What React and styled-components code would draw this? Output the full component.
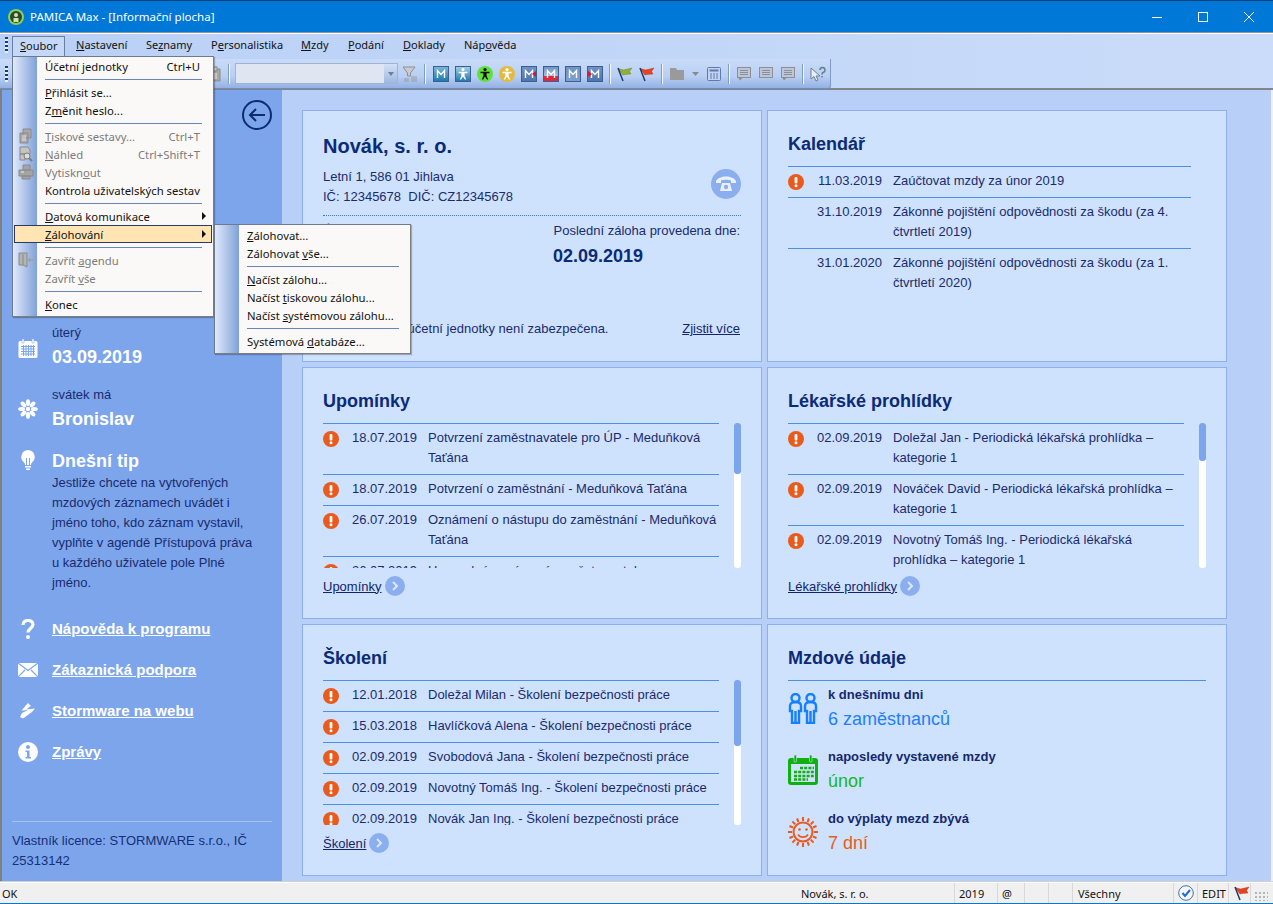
import React from 'react';
import styled, { createGlobalStyle } from 'styled-components';

const GlobalStyle = createGlobalStyle`
  html, body { margin: 0; padding: 0; height: 100%; overflow: hidden; }
  body { font-family: "Liberation Sans", Arial, sans-serif; font-size: 13px; color: #1a2b6d; }
  * { box-sizing: border-box; }
`;

const uiFont = '"Noto Sans", "Liberation Sans", sans-serif';

const Window = styled.div`
  position: relative;
  width: 1273px;
  height: 904px;
  display: flex;
  flex-direction: column;
  background: #f0f0f0;
  overflow: hidden;
`;

const TitleBar = styled.div`
  height: 33px;
  flex: none;
  background: #0078d7;
  border-top: 1px solid #0a3f78;
  border-bottom: 1px solid #8f9499;
  display: flex;
  align-items: center;
  padding: 0 1px 0 8px;
  color: white;
  font: 11.5px ${uiFont};
`;

const TitleText = styled.span`
  margin-left: 6px;
  flex: 1;
`;

const WinControl = styled.div`
  width: 46px;
  height: 31px;
  display: flex;
  align-items: center;
  justify-content: center;
`;

const Bars = styled.div`
  flex: none;
  height: 57px;
  border-top: 1px solid white;
  border-bottom: 2px solid #83858a;
  background: linear-gradient(90deg, #b9d0f6 0%, #cadcf9 100%);
`;

const MenuBar = styled.div`
  height: 25px;
  display: flex;
  align-items: flex-start;
  padding: 2px 0 0 5px;
  font: 11px ${uiFont};
  color: #111;
  u { text-underline-offset: 1px; }
`;

const Grip = styled.div`
  width: 3px;
  height: 16px;
  margin: 1px 4px 0 0;
  flex: none;
  background: repeating-linear-gradient(180deg, #1d3a72 0 2px, #e8eefb 2px 4px);
`;

const MenuHead = styled.div`
  width: ${p => p.$w}px;
  height: 20px;
  padding: 0 0 3px 8px;
  display: flex;
  align-items: center;
  flex: none;
  ${p => p.$open && `
    background: #c6d8f7;
    border: 1px solid #6b7f9e;
    border-bottom: none;
    padding-left: 7px;
  `}
`;

const ToolBar = styled.div`
  width: 831px;
  height: 30px;
  display: flex;
  align-items: center;
  padding-left: 5px;
  background: linear-gradient(180deg, #c9dbf8 0%, #b9cff3 60%, #92b1e4 100%);
  border-right: 1px solid #7f9ac8;
  border-bottom: 1px solid #6f8cbf;
  border-radius: 0 0 3px 0;
  ${Grip} { margin-top: 0; }
`;

const ToolSpacer = styled.div`
  flex: none;
  width: ${p => p.$w}px;
`;

const ToolBtn = styled.div`
  flex: none;
  width: ${p => p.$w || 22}px;
  height: 22px;
  display: flex;
  align-items: center;
  justify-content: center;
`;

const ToolSep = styled.div`
  flex: none;
  width: 2px;
  height: 20px;
  margin: 0 3px;
  background: linear-gradient(90deg, #7f9cc9 50%, #f4f8ff 50%);
`;

const Combo = styled.div`
  flex: none;
  width: 163px;
  height: 21px;
  margin-left: 2px;
  margin-right: 1px;
  background: #dfe6f1;
  border: 1px solid #9fb3d2;
  display: flex;
  justify-content: flex-end;
`;

const ComboArrow = styled.div`
  width: 13px;
  background: linear-gradient(180deg, #d4e1f6, #9db8e2);
  display: flex;
  align-items: center;
  justify-content: center;
  &::after {
    content: '';
    border: 3px solid transparent;
    border-top: 4px solid #6c7f9c;
    border-bottom: none;
  }
`;

const Work = styled.div`
  flex: 1;
  min-height: 0;
  display: flex;
  border-left: 2px solid #7f7f7f;
  border-right: 2px solid #f0f0f0;
`;

const Sidebar = styled.aside`
  width: 280px;
  flex: none;
  background: #7ca5ec;
  padding: 10px 28px 0 16px;
  display: flex;
  flex-direction: column;
`;

const BackButton = styled.div`
  align-self: flex-end;
  margin-right: -18px;
  height: 30px;
  margin-bottom: 193px;
`;

const SideRow = styled.div`
  display: flex;
  gap: 14px;
  align-items: ${p => p.$top ? 'flex-start' : 'center'};
  margin-top: ${p => p.$gap || 0}px;
`;

const SideIcon = styled.div`
  width: 20px;
  height: 20px;
  flex: none;
  display: flex;
  align-items: center;
  justify-content: center;
  margin-top: ${p => p.$shift || 0}px;
`;

const SmallLabel = styled.div`
  line-height: 20px;
`;

const BigValue = styled.div`
  font-size: 18px;
  font-weight: bold;
  color: white;
  line-height: 28px;
`;

const TipHead = styled(BigValue)`
  margin-bottom: -2px;
`;

const TipText = styled.div`
  line-height: 20px;
`;

const SideLink = styled.a`
  font-size: 15px;
  font-weight: bold;
  color: white;
  text-decoration: underline;
  line-height: 20px;
`;

const SideLinks = styled.div`
  display: flex;
  flex-direction: column;
  gap: 21px;
  margin-top: 26px;
`;

const License = styled.div`
  margin: auto -18px 0 -6px;
  padding: 9px 0 11px;
  border-top: 1px solid #a6c3f4;
  line-height: 20px;
  color: #153077;
`;

const Main = styled.main`
  flex: 1;
  min-width: 0;
  background: #b8cff8;
  padding: 20px 0 0 20px;
`;

const Cards = styled.div`
  display: grid;
  grid-template-columns: 460px 460px;
  grid-template-rows: 252px 252px 252px;
  gap: 5px;
`;

const Card = styled.section`
  background: #cfe2fd;
  border: 1px solid #8cafef;
  padding: 0 20px;
  display: flex;
  flex-direction: column;
  min-height: 0;
`;

const CardTitle = styled.h2`
  margin: 0;
  height: 55px;
  padding-top: 21px;
  font-size: 18px;
  line-height: 24px;
  font-weight: bold;
  color: #0b2a78;
`;

const CompanyName = styled(CardTitle)`
  font-size: 20px;
  height: auto;
  padding-top: 23px;
`;

const CompanyTop = styled.div`
  display: flex;
  justify-content: space-between;
  align-items: flex-end;
  margin-top: 9px;
  padding-bottom: 8px;
  border-bottom: 1px dotted #4a76c0;
  line-height: 20px;
`;

const PhoneBadge = styled.div`
  width: 30px;
  height: 30px;
  border-radius: 50%;
  background: #8aaeee;
  display: flex;
  align-items: center;
  justify-content: center;
  margin-bottom: 8px;
`;

const BackupRow = styled.div`
  display: flex;
  justify-content: space-between;
  margin-top: 5px;
  padding-right: 1px;
  line-height: 20px;
`;

const BackupRight = styled.div`
  width: 187px;
  text-align: right;
  white-space: nowrap;
  flex: none;
`;

const BackupDate = styled.div`
  font-size: 18px;
  font-weight: bold;
  color: #0b2a78;
  text-align: left;
  line-height: 30px;
`;

const CompanyBottom = styled.div`
  display: flex;
  justify-content: space-between;
  margin-top: auto;
  margin-bottom: 22px;
  padding-right: 1px;
  line-height: 20px;
`;

const TextLink = styled.a`
  color: #12256a;
  text-decoration: underline;
`;

const ListArea = styled.div`
  display: flex;
  gap: 15px;
  height: ${p => p.$h}px;
  flex: none;
`;

const List = styled.div`
  flex: 1;
  min-width: 0;
  overflow: hidden;
  ${p => p.$inset && `margin-right: ${p.$inset}px;`}
`;

const Row = styled.div`
  display: flex;
  border-top: 1px solid #4f8fe2;
  padding: 4px 0 6px;
  line-height: 20px;
`;

const RowIcon = styled.div`
  width: 16px;
  height: 16px;
  flex: none;
  margin-top: 3px;
`;

const RowDate = styled.div`
  width: 78px;
  flex: none;
  text-align: right;
`;

const RowText = styled.div`
  margin-left: 11px;
  flex: 1;
`;

const Track = styled.div`
  width: 7px;
  flex: none;
  background: white;
  border-radius: 3px;
`;

const Thumb = styled.div`
  height: ${p => p.$h}px;
  background: #7ca5ec;
  border-radius: 3px;
`;

const MoreLink = styled.div`
  display: flex;
  align-items: center;
  gap: 3px;
  margin-top: 8px;
`;

const MoreArrow = styled.div`
  width: 20px;
  height: 20px;
  border-radius: 50%;
  background: #8aaeee;
  display: flex;
  align-items: center;
  justify-content: center;
`;

const WageItems = styled.div`
  border-top: 1px solid #4f8fe2;
  padding-top: 4px;
  display: flex;
  flex-direction: column;
`;

const WageItem = styled.div`
  display: flex;
  gap: 10px;
  height: 62px;
`;

const WageIcon = styled.div`
  width: 30px;
  height: 46px;
  flex: none;
  display: flex;
  align-items: center;
`;

const WageLabel = styled.div`
  font-weight: bold;
  line-height: 20px;
  color: #14286e;
`;

const WageValue = styled.div`
  font-size: 18px;
  line-height: 28px;
  color: ${p => p.$color};
`;

const StatusBar = styled.footer`
  flex: none;
  height: 22px;
  border-top: 1px solid #fff;
  border-bottom: 1px solid #0078d7;
  box-shadow: 0 -1px 0 #d0d0d0;
  display: flex;
  align-items: center;
  font: 11px ${uiFont};
  color: #111;
`;

const StatusCell = styled.div`
  flex: ${p => p.$grow ? 1 : 'none'};
  width: ${p => p.$w ? p.$w + 'px' : 'auto'};
  height: 100%;
  padding-left: ${p => p.$pad ?? 4}px;
  display: flex;
  align-items: center;
  ${p => !p.$noline && 'border-right: 1px solid #d8d8d8;'}
`;

const StatusMessage = styled.span`
  flex: 1;
`;

const StatusCompany = styled.span`
  width: 153px;
`;

const ResizeGrip = styled.div`
  width: 14px;
  height: 10px;
  margin: 6px 0 0 3px;
  background: radial-gradient(circle, #b5b5b5 1px, transparent 1.2px) 0 0 / 4px 4px;
`;

const Popup = styled.div`
  position: absolute;
  left: ${p => p.$x}px;
  top: ${p => p.$y}px;
  width: ${p => p.$w}px;
  height: ${p => p.$h}px;
  background: #fbf9f7;
  border: 1px solid #6d7a8c;
  border-right-color: #7d7d7d;
  border-bottom-color: #7d7d7d;
  padding: ${p => p.$pt}px 1px 0 25px;
  box-shadow: 1px 1px 1px rgba(0, 0, 0, 0.25);
  font: 11.3px ${uiFont};
  color: #111;
  z-index: ${p => p.$z || 5};
  u { text-underline-offset: 1px; }
  &::before {
    content: '';
    position: absolute;
    left: 0;
    top: 0;
    bottom: 0;
    width: 24px;
    background: linear-gradient(90deg, #e0e9fb 0%, #7fa1d8 100%);
  }
`;

const PopupItem = styled.div`
  position: relative;
  height: 18px;
  display: flex;
  align-items: center;
  justify-content: space-between;
  white-space: nowrap;
  padding: 0 12px 0 7px;
  margin-left: ${p => p.$active ? '-24px' : 0};
  ${p => p.$active && `
    padding-left: 31px;
    background: #ffe4b4;
    outline: 1px solid #2a3a66;
    outline-offset: -1px;
  `}
  color: ${p => p.$off ? '#7b7b7b' : '#111'};
`;

const PopupIcon = styled.div`
  position: absolute;
  left: -20px;
  top: 1px;
  width: 16px;
  height: 16px;
`;

const PopupArrow = styled.span`
  border: 4px solid transparent;
  border-left: 4px solid #111;
  border-right: none;
  margin-right: -6px;
`;

const PopupSep = styled.div`
  height: 8px;
  margin: 0 10px 0 7px;
  padding-top: 4px;
  &::after {
    content: '';
    display: block;
    height: 1px;
    background: #6a86b8;
  }
`;

const Alert = () => (
  <svg width="16" height="16" viewBox="0 0 16 16">
    <circle cx="8" cy="8" r="8" fill="#ea5a1c" />
    <rect x="6.6" y="3" width="2.8" height="6.4" rx="1" fill="#fff" />
    <circle cx="8" cy="11.8" r="1.5" fill="#fff" />
  </svg>
);

const Chevron = () => (
  <svg width="10" height="12" viewBox="0 0 10 12">
    <path d="M3 2l4 4-4 4" fill="none" stroke="#dbe7fb" strokeWidth="2" />
  </svg>
);

const Person = ({ color }) => (
  <g fill={color}>
    <circle cx="8" cy="3.6" r="1.6" />
    <path d="M3.5 5.8h9v1.4H9.6v2.6l1.6 3.6H9.8L8 10.4l-1.8 3H4.8l1.6-3.6V7.2H3.5z" />
  </g>
);

const MIcon = ({ top = '#6f93c6', bottom = '#4f74ab', band, markLeft, markRight, person }) => {
  const id = `m${top.slice(1)}${bottom.slice(1)}`;
  return (
    <svg width="16" height="16" viewBox="0 0 16 16">
      <defs>
        <linearGradient id={id} x1="0" y1="0" x2="0" y2="1">
          <stop offset="0" stopColor={top} />
          <stop offset="1" stopColor={bottom} />
        </linearGradient>
      </defs>
      <rect x="0.5" y="0.5" width="15" height="15" fill={`url(#${id})`} stroke="#3d5e92" />
      {band && <rect x="1" y="10" width="14" height="5" fill={band} />}
      {person ? <Person color="#fff" /> : <path d="M4.5 12V4.5L8 8.5l3.5-4V12" fill="none" stroke="#fff" strokeWidth="1.4" />}
      {markRight && <path d="M15 5v6l-4-3z" fill="#e8102a" />}
      {markLeft && <path d="M1 5v6l4-3z" fill="#e8102a" />}
    </svg>
  );
};

const RoundPerson = ({ bg, color }) => (
  <svg width="16" height="16" viewBox="0 0 16 16">
    <circle cx="8" cy="8" r="8" fill={bg} />
    <Person color={color} />
  </svg>
);

const Flag = ({ color, dark }) => (
  <svg width="16" height="16" viewBox="0 0 16 16">
    <path d="M1 2.5l5.5 1.5L15 2l-2.5 3.5L14 8l-6 .5-2 .5z" fill={color} stroke={dark} strokeWidth="0.4" />
    <path d="M1 2l5 13" stroke="#1f3a70" strokeWidth="1.5" fill="none" />
  </svg>
);

const Note = ({ tail }) => (
  <svg width="16" height="16" viewBox="0 0 16 16">
    <rect x="1.5" y="1.5" width="13" height="10" fill="#b9c6dd" stroke="#8f8f8f" />
    <path d="M4 4.5h8M4 6.5h8M4 8.5h8" stroke="#8f8f8f" />
    {tail && <path d="M2 11.5h5l-3 3z" fill="#8f8f8f" />}
  </svg>
);

const WinIcons = {
  min: <svg width="10" height="10"><path d="M0 5.5h10" stroke="#fff" /></svg>,
  max: <svg width="10" height="10"><rect x="0.5" y="0.5" width="9" height="9" fill="none" stroke="#fff" /></svg>,
  close: <svg width="10" height="10"><path d="M0 0l10 10M10 0L0 10" stroke="#fff" /></svg>,
};

const greyDoc = (
  <svg width="16" height="16" viewBox="0 0 16 16">
    <path d="M5 1h8v9H5zM2 5h8v10H2z" fill="#a8a8a8" stroke="#8a8a8a" />
    <path d="M4 8h4M4 10h4M4 12h4" stroke="#e8e8e8" />
  </svg>
);
const greyPreview = (
  <svg width="16" height="16" viewBox="0 0 16 16">
    <path d="M2 1h8l2 3v4H2z M2 8h5v6H2z" fill="#c4c4c4" stroke="#8a8a8a" />
    <circle cx="9" cy="10" r="3" fill="#ddd" stroke="#7d7d7d" />
    <path d="M11 12l3 3" stroke="#7d7d7d" strokeWidth="2" />
  </svg>
);
const greyPrinter = (
  <svg width="16" height="16" viewBox="0 0 16 16">
    <path d="M5 1h7v5H5zM1 6h14v6H1zM4 12h8v3H4z" fill="#a4a4a4" stroke="#8a8a8a" />
    <path d="M3 8h3" stroke="#eee" />
  </svg>
);
const greyExit = (
  <svg width="16" height="16" viewBox="0 0 16 16">
    <path d="M1 1h8v14L5 13H1z" fill="#b4b4b4" stroke="#8a8a8a" />
    <path d="M5 2v11" stroke="#8a8a8a" />
    <path d="M15 7h-3V5l-2 3 2 3V9h3z" fill="#a0a0a0" />
  </svg>
);
const greyClip = (
  <svg width="16" height="16" viewBox="0 0 16 16">
    <path d="M2 3h12v12H2z" fill="#a8a8a8" stroke="#8a8a8a" />
    <rect x="5" y="1" width="6" height="4" fill="#c8c8c8" stroke="#8a8a8a" />
    <path d="M5 8h6M5 10h6M5 12h6" stroke="#e8e8e8" />
  </svg>
);

const petals = [0, 45, 90, 135, 180, 225, 270, 315];

const reminders = [
  ['18.07.2019', 'Potvrzení zaměstnavatele pro ÚP - Meduňková Taťána'],
  ['18.07.2019', 'Potvrzení o zaměstnání - Meduňková Taťána'],
  ['26.07.2019', 'Oznámení o nástupu do zaměstnání - Meduňková Taťána'],
  ['26.07.2019', 'Hromadné oznámení zaměstnavatele'],
];

const checks = [
  ['02.09.2019', 'Doležal Jan - Periodická lékařská prohlídka – kategorie 1'],
  ['02.09.2019', 'Nováček David - Periodická lékařská prohlídka – kategorie 1'],
  ['02.09.2019', 'Novotný Tomáš Ing. - Periodická lékařská prohlídka – kategorie 1'],
];

const trainings = [
  ['12.01.2018', 'Doležal Milan - Školení bezpečnosti práce'],
  ['15.03.2018', 'Havlíčková Alena - Školení bezpečnosti práce'],
  ['02.09.2019', 'Svobodová Jana - Školení bezpečnosti práce'],
  ['02.09.2019', 'Novotný Tomáš Ing. - Školení bezpečnosti práce'],
  ['02.09.2019', 'Novák Jan Ing. - Školení bezpečnosti práce'],
];

const calendar = [
  ['11.03.2019', 'Zaúčtovat mzdy za únor 2019', true],
  ['31.10.2019', 'Zákonné pojištění odpovědnosti za škodu (za 4. čtvrtletí 2019)'],
  ['31.01.2020', 'Zákonné pojištění odpovědnosti za škodu (za 1. čtvrtletí 2020)'],
];

const Rows = ({ items, alert = true }) => items.map(([date, text, flagged], i) => (
  <Row key={i}>
    <RowIcon>{(alert || flagged) && <Alert />}</RowIcon>
    <RowDate>{date}</RowDate>
    <RowText>{text}</RowText>
  </Row>
));

const ListCard = ({ title, items, thumb, height, more }) => (
  <Card>
    <CardTitle>{title}</CardTitle>
    <ListArea $h={height}>
      <List><Rows items={items} /></List>
      <Track><Thumb $h={thumb} /></Track>
    </ListArea>
    <MoreLink>
      <TextLink>{more}</TextLink>
      <MoreArrow><Chevron /></MoreArrow>
    </MoreLink>
  </Card>
);

export default function App() {
  return (
    <>
      <GlobalStyle />
      <Window>
        <TitleBar>
          <svg width="16" height="16" viewBox="0 0 16 16">
            <circle cx="8" cy="8" r="8" fill="#8fce5a" />
            <circle cx="8" cy="8" r="6" fill="#2b4a2b" />
            <circle cx="8" cy="6" r="2" fill="#cfe8a8" />
            <rect x="5.5" y="9" width="5" height="4" fill="#cfe8a8" />
          </svg>
          <TitleText>PAMICA Max - [Informační plocha]</TitleText>
          <WinControl>{WinIcons.min}</WinControl>
          <WinControl>{WinIcons.max}</WinControl>
          <WinControl>{WinIcons.close}</WinControl>
        </TitleBar>

        <Bars>
          <MenuBar>
            <Grip />
            <MenuHead $w={53} $open><span><u>S</u>oubor</span></MenuHead>
            <ToolSpacer $w={3} />
            <MenuHead $w={70}><span><u>N</u>astavení</span></MenuHead>
            <MenuHead $w={65}><span>Se<u>z</u>namy</span></MenuHead>
            <MenuHead $w={90}><span>P<u>e</u>rsonalistika</span></MenuHead>
            <MenuHead $w={47}><span><u>M</u>zdy</span></MenuHead>
            <MenuHead $w={55}><span><u>P</u>odání</span></MenuHead>
            <MenuHead $w={61}><span><u>D</u>oklady</span></MenuHead>
            <MenuHead $w={70}><span>Náp<u>o</u>věda</span></MenuHead>
          </MenuBar>
          <ToolBar>
            <Grip />
            <ToolSpacer $w={191} />
            <ToolBtn>{greyClip}</ToolBtn>
            <ToolSep />
            <Combo><ComboArrow /></Combo>
            <ToolBtn>
              <svg width="16" height="16" viewBox="0 0 16 16">
                <path d="M1 1h12L8.5 7v3h-3V7z" fill="#c8ccd2" stroke="#8f8f8f" />
                <path d="M9 11h6M9 13h6M9 15h6M2 13h5M2 15h5" stroke="#9a9a9a" />
              </svg>
            </ToolBtn>
            <ToolSep />
            <ToolSpacer $w={1} />
            <ToolBtn><MIcon top="#7cb8d8" bottom="#1b78ad" /></ToolBtn>
            <ToolBtn><MIcon top="#a5cfe6" bottom="#1b78ad" person /></ToolBtn>
            <ToolBtn><RoundPerson bg="#5fe03d" color="#111" /></ToolBtn>
            <ToolBtn><RoundPerson bg="#e2bb3e" color="#fff" /></ToolBtn>
            <ToolBtn><MIcon markRight /></ToolBtn>
            <ToolBtn><MIcon top="#6f93c6" bottom="#c8d6ea" band="#e0283c" /></ToolBtn>
            <ToolBtn><MIcon top="#6f93c6" bottom="#7fa0cc" /></ToolBtn>
            <ToolBtn><MIcon markLeft /></ToolBtn>
            <ToolSep />
            <ToolBtn><Flag color="#8fb030" dark="#5f7a20" /></ToolBtn>
            <ToolBtn><Flag color="#e8431e" dark="#b02a10" /></ToolBtn>
            <ToolSep />
            <ToolBtn>
              <svg width="16" height="16" viewBox="0 0 16 16">
                <path d="M1 2h6l1 2h7v10H1z" fill="#9a9a9a" />
              </svg>
            </ToolBtn>
            <ToolBtn $w={15}>
              <svg width="7" height="4"><path d="M0 0h7L3.5 4z" fill="#8a8a8a" /></svg>
            </ToolBtn>
            <ToolBtn>
              <svg width="16" height="16" viewBox="0 0 16 16">
                <rect x="1.5" y="1.5" width="13" height="13" rx="1" fill="#c4d4ee" stroke="#5c7ab0" />
                <rect x="3.5" y="3.5" width="9" height="2" fill="#5c7ab0" />
                <path d="M4 8h2M7 8h2M10 8h2M4 10h2M7 10h2M10 10h2M4 12h2M7 12h2M10 12h2" stroke="#5c7ab0" />
              </svg>
            </ToolBtn>
            <ToolSep />
            <ToolBtn><Note tail /></ToolBtn>
            <ToolBtn><Note /></ToolBtn>
            <ToolBtn><Note tail /></ToolBtn>
            <ToolSep />
            <ToolBtn>
              <svg width="16" height="16" viewBox="0 0 16 16">
                <path d="M1 2v11l3-2.5 2 4.5 2-1-2-4h4z" fill="#e8eef8" stroke="#6f7e90" />
                <path d="M10 4a2.5 2.5 0 1 1 3 2.5c-.8.5-1 1-1 2" fill="none" stroke="#5f7f8f" strokeWidth="1.5" />
                <rect x="11.3" y="10" width="1.5" height="1.5" fill="#5f7f8f" />
              </svg>
            </ToolBtn>
          </ToolBar>
        </Bars>

        <Work>
          <Sidebar>
            <BackButton>
              <svg width="30" height="30" viewBox="0 0 30 30">
                <circle cx="15" cy="15" r="14" fill="none" stroke="#0e2a70" strokeWidth="2" />
                <path d="M23 15H8M14 9l-6 6 6 6" fill="none" stroke="#0e2a70" strokeWidth="2" />
              </svg>
            </BackButton>
            <SideRow>
              <SideIcon $shift={4}>
                <svg width="20" height="20" viewBox="0 0 20 20">
                  <rect x="0.5" y="2" width="19" height="17" rx="1.5" fill="#fff" />
                  <rect x="4" y="0" width="2" height="4" fill="#fff" stroke="#7ca5ec" strokeWidth="0.5" />
                  <rect x="14" y="0" width="2" height="4" fill="#fff" stroke="#7ca5ec" strokeWidth="0.5" />
                  <path d="M3 7.5h14M3 10h14M3 12.5h14M3 15h14M5.5 6v11M8 6v11M10.5 6v11M13 6v11M15.5 6v11" stroke="#7ca5ec" />
                </svg>
              </SideIcon>
              <div>
                <SmallLabel>úterý</SmallLabel>
                <BigValue>03.09.2019</BigValue>
              </div>
            </SideRow>
            <SideRow $gap={14}>
              <SideIcon $shift={0}>
                <svg width="20" height="20" viewBox="0 0 20 20" fill="#fff">
                  {petals.map(a => (
                    <ellipse key={a} cx="10" cy="3.6" rx="2.1" ry="3.4" transform={`rotate(${a} 10 10)`} />
                  ))}
                  <circle cx="10" cy="10" r="2.2" />
                </svg>
              </SideIcon>
              <div>
                <SmallLabel>svátek má</SmallLabel>
                <BigValue>Bronislav</BigValue>
              </div>
            </SideRow>
            <SideRow $top $gap={14}>
              <SideIcon $shift={3}>
                <svg width="16" height="20" viewBox="0 0 16 20">
                  <path d="M8 0a7 7 0 0 0-4 12.5c.8.7 1 1.5 1 2.5h6c0-1 .2-1.8 1-2.5A7 7 0 0 0 8 0z" fill="#fff" />
                  <path d="M6.5 8v7M9.5 8v7" stroke="#7ca5ec" />
                  <rect x="5" y="16" width="6" height="1.5" fill="#fff" />
                  <rect x="6" y="18.5" width="4" height="1.5" fill="#fff" />
                </svg>
              </SideIcon>
              <div>
                <TipHead>Dnešní tip</TipHead>
                <TipText>
                  Jestliže chcete na vytvořených mzdových záznamech uvádět i jméno toho, kdo záznam vystavil, vyplňte v agendě Přístupová práva u každého uživatele pole Plné jméno.
                </TipText>
              </div>
            </SideRow>
            <SideLinks>
              <SideRow>
                <SideIcon>
                  <svg width="14" height="20" viewBox="0 0 14 20">
                    <path d="M2 6c0-6 10-6 10-.5 0 4-5 4-5 8" fill="none" stroke="#fff" strokeWidth="3.2" />
                    <circle cx="7" cy="18" r="2" fill="#fff" />
                  </svg>
                </SideIcon>
                <SideLink>Nápověda k programu</SideLink>
              </SideRow>
              <SideRow>
                <SideIcon>
                  <svg width="20" height="14" viewBox="0 0 20 14">
                    <rect width="20" height="14" fill="#fff" />
                    <path d="M0 0l10 7.5L20 0M0 14l7-7M20 14l-7-7" fill="none" stroke="#7ca5ec" strokeWidth="1.2" />
                  </svg>
                </SideIcon>
                <SideLink>Zákaznická podpora</SideLink>
              </SideRow>
              <SideRow>
                <SideIcon>
                  <svg width="18" height="18" viewBox="0 0 18 18">
                    <path d="M9 1l3 3-5 3.5 9-1-3 3.5-9 6.5-3-1.5 2-4 6-3-6.5.5z" fill="#fff" />
                  </svg>
                </SideIcon>
                <SideLink>Stormware na webu</SideLink>
              </SideRow>
              <SideRow>
                <SideIcon>
                  <svg width="20" height="20" viewBox="0 0 20 20">
                    <circle cx="10" cy="10" r="10" fill="#fff" />
                    <circle cx="10" cy="5" r="2" fill="#7ca5ec" />
                    <path d="M7.5 8.5h4V15H13v1.5H7.5V15H9v-5H7.5z" fill="#7ca5ec" />
                  </svg>
                </SideIcon>
                <SideLink>Zprávy</SideLink>
              </SideRow>
            </SideLinks>
            <License>Vlastník licence: STORMWARE s.r.o., IČ 25313142</License>
          </Sidebar>

          <Main>
            <Cards>
              <Card>
                <CompanyName>Novák, s. r. o.</CompanyName>
                <CompanyTop>
                  <div>Letní 1, 586 01 Jihlava<br />IČ: 12345678&nbsp; DIČ: CZ12345678</div>
                  <PhoneBadge>
                    <svg width="20" height="16" viewBox="0 0 20 16" fill="#eaf1fd">
                      <path d="M0 5C3-1 17-1 20 5v2h-5V4.5C13 3.5 7 3.5 5 4.5V7H0z" />
                      <path d="M6 7h8l2 8H4z" />
                      <circle cx="10" cy="11" r="2.2" fill="#8aaeee" />
                    </svg>
                  </PhoneBadge>
                </CompanyTop>
                <BackupRow>
                  <div>Účetní období</div>
                  <BackupRight>
                    Poslední záloha provedena dne:
                    <BackupDate>02.09.2019</BackupDate>
                  </BackupRight>
                </BackupRow>
                <CompanyBottom>
                  <div>Databáze této účetní jednotky není zabezpečena.</div>
                  <TextLink>Zjistit více</TextLink>
                </CompanyBottom>
              </Card>

              <Card>
                <CardTitle>Kalendář</CardTitle>
                <List $inset={15}><Rows items={calendar} alert={false} /></List>
              </Card>

              <ListCard title="Upomínky" items={reminders} thumb={51} height={145} more="Upomínky" />
              <ListCard title="Lékařské prohlídky" items={checks} thumb={38} height={145} more="Lékařské prohlídky" />
              <ListCard title="Školení" items={trainings} thumb={66} height={145} more="Školení" />

              <Card>
                <CardTitle>Mzdové údaje</CardTitle>
                <WageItems>
                  <WageItem>
                    <WageIcon>
                      <svg width="30" height="31" viewBox="0 0 30 31" fill="none" stroke="#1480ff" strokeWidth="2.4">
                        <circle cx="7.5" cy="5" r="4" />
                        <circle cx="22.5" cy="5" r="4" />
                        <path d="M2 18v-5c0-3 2-4 5.5-4S13 10 13 13v5h-2v12H4V18z" />
                        <path d="M17 18v-5c0-3 2-4 5.5-4S28 10 28 13v5h-2v12h-7V18z" />
                        <path d="M7.5 18v12M22.5 18v12" />
                      </svg>
                    </WageIcon>
                    <div>
                      <WageLabel>k dnešnímu dni</WageLabel>
                      <WageValue $color="#1e7ffb">6 zaměstnanců</WageValue>
                    </div>
                  </WageItem>
                  <WageItem>
                    <WageIcon>
                      <svg width="30" height="30" viewBox="0 0 30 30">
                        <rect x="0" y="3" width="30" height="27" rx="3" fill="#11b011" />
                        <rect x="6" y="0" width="2.5" height="7" rx="1" fill="#11b011" stroke="#cfe2fd" strokeWidth="0.6" />
                        <rect x="21.5" y="0" width="2.5" height="7" rx="1" fill="#11b011" stroke="#cfe2fd" strokeWidth="0.6" />
                        <rect x="3" y="9" width="24" height="18" fill="#cfe2fd" />
                        <path d="M12 13h14M6 17h20M6 21h20M6 24.5h14" stroke="#11b011" strokeWidth="2.4" strokeDasharray="3 1.2" />
                      </svg>
                    </WageIcon>
                    <div>
                      <WageLabel>naposledy vystavené mzdy</WageLabel>
                      <WageValue $color="#1cb41c">únor</WageValue>
                    </div>
                  </WageItem>
                  <WageItem>
                    <WageIcon>
                      <svg width="30" height="30" viewBox="0 0 30 30" fill="none" stroke="#ea5a1c">
                        <circle cx="15" cy="15" r="9.5" strokeWidth="2" />
                        <path d="M15 0v4M15 26v4M0 15h4M26 15h4M4.4 4.4l2.8 2.8M22.8 22.8l2.8 2.8M25.6 4.4l-2.8 2.8M7.2 22.8l-2.8 2.8M9 1.5l1.5 3.5M21 1.5L19.5 5M9 28.5l1.5-3.5M21 28.5L19.5 25M1.5 9L5 10.5M1.5 21L5 19.5M28.5 9L25 10.5M28.5 21L25 19.5" strokeWidth="2" />
                        <circle cx="11.5" cy="12.5" r="1.3" fill="#ea5a1c" stroke="none" />
                        <circle cx="18.5" cy="12.5" r="1.3" fill="#ea5a1c" stroke="none" />
                        <path d="M10 17.5c2 3.5 8 3.5 10 0" strokeWidth="1.6" />
                      </svg>
                    </WageIcon>
                    <div>
                      <WageLabel>do výplaty mezd zbývá</WageLabel>
                      <WageValue $color="#ea5a1c">7 dní</WageValue>
                    </div>
                  </WageItem>
                </WageItems>
              </Card>
            </Cards>
          </Main>
        </Work>

        <StatusBar>
          <StatusCell $w={955} $pad={2}>
            <StatusMessage>OK</StatusMessage>
            <StatusCompany>Novák, s. r. o.</StatusCompany>
          </StatusCell>
          <StatusCell $w={43}>2019</StatusCell>
          <StatusCell $w={27}>@</StatusCell>
          <StatusCell $w={24} />
          <StatusCell $w={24} />
          <StatusCell $w={101} $pad={5}>Všechny</StatusCell>
          <StatusCell $w={24} $pad={4}>
            <svg width="16" height="16" viewBox="0 0 16 16">
              <circle cx="8" cy="8" r="7.3" fill="#f4f8fe" stroke="#4a6fa8" />
              <path d="M4.5 8L7 11l5-6" fill="none" stroke="#1a6fd0" strokeWidth="2" />
            </svg>
          </StatusCell>
          <StatusCell $w={31}>EDIT</StatusCell>
          <StatusCell $w={22} $pad={5}><Flag color="#e8431e" dark="#b02a10" /></StatusCell>
          <StatusCell $grow $noline $pad={0}><ResizeGrip /></StatusCell>
        </StatusBar>

        <Popup $x={12} $y={56} $w={202} $h={261} $pt={0}>
          <PopupItem><span>Účetní <u>j</u>ednotky</span><span>Ctrl+U</span></PopupItem>
          <PopupSep />
          <PopupItem><span><u>P</u>řihlásit se...</span></PopupItem>
          <PopupItem><span>Z<u>m</u>ěnit heslo...</span></PopupItem>
          <PopupSep />
          <PopupItem $off><PopupIcon>{greyDoc}</PopupIcon><span><u>T</u>iskové sestavy...</span><span>Ctrl+T</span></PopupItem>
          <PopupItem $off><PopupIcon>{greyPreview}</PopupIcon><span><u>N</u>áhled</span><span>Ctrl+Shift+T</span></PopupItem>
          <PopupItem $off><PopupIcon>{greyPrinter}</PopupIcon><span>Vytiskn<u>o</u>ut</span></PopupItem>
          <PopupItem><span>Kontrola uživatelských sestav</span></PopupItem>
          <PopupSep />
          <PopupItem><span><u>D</u>atová komunikace</span><PopupArrow /></PopupItem>
          <PopupItem $active><span><u>Z</u>álohování</span><PopupArrow /></PopupItem>
          <PopupSep />
          <PopupItem $off><PopupIcon>{greyExit}</PopupIcon><span>Zavřít <u>a</u>gendu</span></PopupItem>
          <PopupItem $off><span>Zavřít <u>v</u>še</span></PopupItem>
          <PopupSep />
          <PopupItem><span><u>K</u>onec</span></PopupItem>
        </Popup>

        <Popup $x={214} $y={224} $w={197} $h={130} $pt={1} $z={6}>
          <PopupItem><span><u>Z</u>álohovat...</span></PopupItem>
          <PopupItem><span>Zálohovat <u>v</u>še...</span></PopupItem>
          <PopupSep />
          <PopupItem><span><u>N</u>ačíst zálohu...</span></PopupItem>
          <PopupItem><span>Načíst <u>t</u>iskovou zálohu...</span></PopupItem>
          <PopupItem><span>Načíst <u>s</u>ystémovou zálohu...</span></PopupItem>
          <PopupSep />
          <PopupItem><span>Systémová <u>d</u>atabáze...</span></PopupItem>
        </Popup>
      </Window>
    </>
  );
}
